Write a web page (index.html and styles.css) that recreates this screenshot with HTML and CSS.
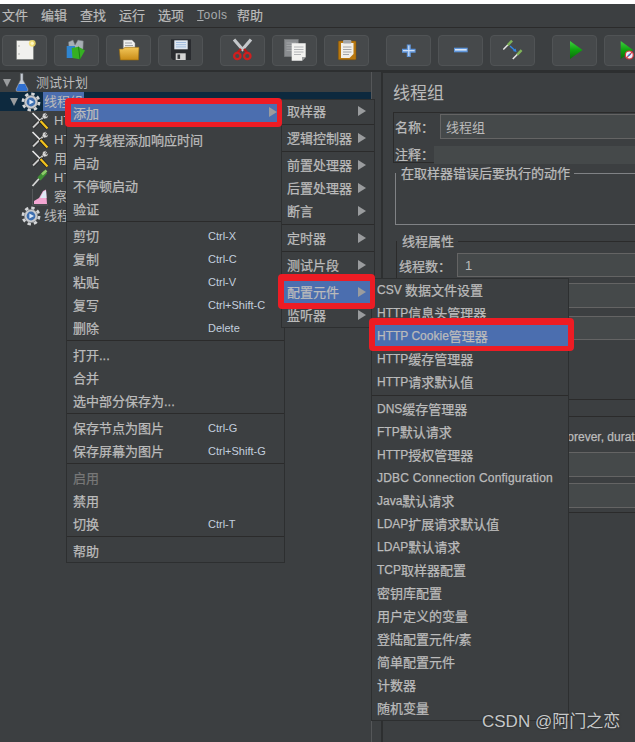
FILE: index.html
```html
<!doctype html>
<html lang="zh-CN">
<head>
  <meta charset="UTF-8">
  <title>线程组</title>
  <link rel="stylesheet" href="styles.css">
</head>
<body>
  <svg class="icon-defs" aria-hidden="true">
    <defs>
      <linearGradient id="greenPlay" x1="0" y1="0" x2="0" y2="1">
        <stop offset="0" stop-color="#3fd13f"/>
        <stop offset="0.5" stop-color="#0fa30f"/>
        <stop offset="1" stop-color="#0a6d0a"/>
      </linearGradient>
      <linearGradient id="folderFill" x1="0" y1="0" x2="0" y2="1">
        <stop offset="0" stop-color="#f2c65a"/>
        <stop offset="1" stop-color="#c98c16"/>
      </linearGradient>
      <symbol id="i-gear" viewBox="0 0 20 20">
        <circle cx="10" cy="10" r="7.6" fill="none" stroke="#d4d6d8" stroke-width="3.6" stroke-dasharray="3.2 2.77"/>
        <circle cx="10" cy="10" r="6.6" fill="#c9cbce" stroke="#83878a" stroke-width="0.8"/>
        <circle cx="10" cy="10" r="4.4" fill="#3e6fb0"/>
        <path d="M8.4 7.4 L13 10 L8.4 12.6 Z" fill="#dbe7f7"/>
      </symbol>
      <symbol id="i-tools" viewBox="0 0 18 18">
        <path d="M15.5 2 L2 15.5" stroke="#202020" stroke-width="3.4" fill="none"/>
        <path d="M15.5 2 L2 15.5" stroke="#c8c8c8" stroke-width="2" fill="none"/>
        <path d="M12 1.5 L15.5 0.5 L14 3.5 L15 4.5 L17.5 3 L16.5 6 L13.5 7 L11 5 Z" fill="#d8d8d8" stroke="#333" stroke-width="0.5"/>
        <path d="M1.5 1 L9 8.5" stroke="#e8e8e8" stroke-width="1.6" fill="none"/>
        <path d="M9 8.5 L16.5 16.5" stroke="#1c1c1c" stroke-width="3.8" fill="none"/>
        <path d="M9.5 9 L16.5 16.5" stroke="#f0c11e" stroke-width="2.4" fill="none"/>
      </symbol>
      <symbol id="i-pipette" viewBox="0 0 18 18">
        <path d="M1.5 17 L9.5 8" stroke="#d8d8d8" stroke-width="1.8" fill="none"/>
        <path d="M8 10 L14.5 3" stroke="#3f8f35" stroke-width="4.4" fill="none"/>
        <path d="M11 5.5 L15.5 1.5" stroke="#8ecb6a" stroke-width="2.6" fill="none"/>
      </symbol>
      <symbol id="i-graph" viewBox="0 0 18 18">
        <path d="M1.5 1 V17 H17" stroke="#55585a" stroke-width="1" fill="none"/>
        <path d="M3 16 L3 13 L8 10 L12 3 L15 1.5 L16 16 Z" fill="#f3a6d2"/>
        <path d="M9 10 L12.5 3.5 L15 2.5 L15.5 10 Z" fill="#dfe9f5"/>
      </symbol>
      <symbol id="i-flask" viewBox="0 0 14 19">
        <path d="M5.4 0.5 H8 V7 L13 16 Q13.5 18.5 11.5 18.5 H2.5 Q0.5 18.5 1 16 L5.4 7 Z" fill="#c6ccd4" stroke="#6f7478" stroke-width="0.6"/>
        <path d="M3.8 11 H10 L12.6 16.4 Q13 18 11.4 18 H2.6 Q1 18 1.4 16.4 Z" fill="#2f6fd0"/>
      </symbol>
      <symbol id="i-stick" viewBox="0 0 12 12">
        <path d="M0.8 11 L6 5.8" stroke="#e4e4e4" stroke-width="1.6" fill="none"/>
        <path d="M5.5 6.3 L10 1.8" stroke="#7fb35a" stroke-width="2.6" fill="none"/>
      </symbol>
    </defs>
  </svg>

  <div class="top-strip"></div>

  <nav class="menu-bar">
    <span>文件</span>
    <span>编辑</span>
    <span>查找</span>
    <span>运行</span>
    <span>选项</span>
    <span class="menu-tools"><u>T</u>ools</span>
    <span>帮助</span>
  </nav>

  <div class="toolbar">
    <button class="tool-btn">
      <svg viewBox="0 0 45 31">
        <rect x="14.7" y="5.7" width="16.6" height="18.6" fill="#f1f1ee" stroke="#8d8f8c" stroke-width="0.6"/>
        <circle cx="17" cy="11" r="0.7" fill="#999"/>
        <circle cx="17" cy="19" r="0.7" fill="#999"/>
        <circle cx="30.3" cy="8.3" r="3.4" fill="#f7e06a" opacity="0.85"/>
        <circle cx="30.3" cy="8.3" r="1.6" fill="#fff7c2"/>
      </svg>
    </button>
    <button class="tool-btn">
      <svg viewBox="0 0 45 31">
        <path d="M14.5 7 L19 5 L21 10 L24 5 L29.3 6 L29 14 L15 14 Z" fill="#a8afb5" stroke="#71777b" stroke-width="0.5"/>
        <rect x="12.7" y="11" width="8.3" height="12" fill="#2f85d0"/>
        <path d="M17.7 13 L24.5 11.7 L31 15.5 L26 24.3 L18.5 23 Z" fill="#35b022"/>
        <path d="M24.5 11.7 L26 24.3" stroke="#1d7d15" stroke-width="1" fill="none"/>
      </svg>
    </button>
    <button class="tool-btn">
      <svg viewBox="0 0 45 31">
        <path d="M17.3 5 H26 L29 8 V16 H17.3 Z" fill="#efefef" stroke="#8b8b8b" stroke-width="0.5"/>
        <path d="M19 8 H26 M19 10.5 H27 M19 13 H27" stroke="#8a8f96" stroke-width="0.8"/>
        <path d="M13.3 14 H17 L19 12.3 H33 L32.5 25 H14.3 Z" fill="url(#folderFill)" stroke="#96690f" stroke-width="0.6"/>
      </svg>
    </button>
    <button class="tool-btn">
      <svg viewBox="0 0 45 31">
        <path d="M13 4.3 H33 V25 H15 L13 23 Z" fill="#2a2c30"/>
        <rect x="16.3" y="5.3" width="13.4" height="9" fill="#dfe7f2"/>
        <path d="M18 7.5 H28 M18 9.7 H28 M18 11.9 H28" stroke="#8fb0d8" stroke-width="0.8"/>
        <rect x="17.7" y="18.3" width="10" height="6.7" fill="#d4d4d4"/>
        <rect x="19.5" y="19.5" width="2.6" height="4.4" fill="#35373a"/>
      </svg>
    </button>

    <button class="tool-btn group-start">
      <svg viewBox="0 0 45 31">
        <path d="M14 4.5 L23.5 15.5 M31 4.5 L21.5 15.5" stroke="#c4c7ca" stroke-width="3.2" fill="none"/>
        <path d="M21 14 L17.5 17.5 M24 14 L27 17.5" stroke="#b51a1a" stroke-width="2.4" fill="none"/>
        <circle cx="17.3" cy="21" r="3.2" fill="none" stroke="#cf1f1f" stroke-width="2.3"/>
        <circle cx="27.3" cy="21" r="3.2" fill="none" stroke="#cf1f1f" stroke-width="2.3"/>
      </svg>
    </button>
    <button class="tool-btn">
      <svg viewBox="0 0 45 31">
        <rect x="12.3" y="4.3" width="14" height="17.4" fill="#8a8d90" stroke="#75787a" stroke-width="0.5"/>
        <path d="M14.5 8 H24 M14.5 10.5 H24 M14.5 13 H24 M14.5 15.5 H24" stroke="#a8abad" stroke-width="0.8"/>
        <path d="M19.7 8.3 H33.7 V22 L30 25.7 H19.7 Z" fill="#f2f2f0"/>
        <path d="M30 25.7 V22 H33.7 Z" fill="#9b9d9e"/>
        <path d="M22 12 H31.5 M22 14.5 H31.5 M22 17 H31.5 M22 19.5 H29" stroke="#a2a5a8" stroke-width="0.8"/>
      </svg>
    </button>
    <button class="tool-btn">
      <svg viewBox="0 0 45 31">
        <rect x="14.3" y="6" width="17.7" height="18.7" rx="0.8" fill="#b9780f" stroke="#7f5208" stroke-width="0.5"/>
        <path d="M17 8 H29.5 V19 L25.5 23 H17 Z" fill="#f0efe9"/>
        <path d="M19 12 H27.5 M19 14.5 H27.5 M19 17 H27.5 M19 19.5 H25" stroke="#8f9296" stroke-width="0.8"/>
        <rect x="19" y="5" width="8.4" height="3.4" rx="1" fill="#a3a6a8"/>
      </svg>
    </button>

    <button class="tool-btn group-start">
      <svg viewBox="0 0 45 31">
        <path d="M22.8 9.5 V22 M16 15.7 H29.6" stroke="#5f95da" stroke-width="4" fill="none"/>
        <path d="M22.8 10.5 V21 M17 15.7 H28.6" stroke="#cfe0f7" stroke-width="1.2" fill="none"/>
      </svg>
    </button>
    <button class="tool-btn">
      <svg viewBox="0 0 45 31">
        <rect x="16" y="12.7" width="13.7" height="4.6" fill="#5f95da"/>
        <rect x="17" y="14" width="11.7" height="1.6" fill="#d8e6f8"/>
      </svg>
    </button>
    <button class="tool-btn">
      <svg viewBox="0 0 45 31">
        <use href="#i-stick" x="12.5" y="4" width="11.5" height="11.5"/>
        <use href="#i-stick" x="22" y="13.5" width="11.5" height="11.5"/>
        <path d="M20 11 L25 15.5" stroke="#2f86e8" stroke-width="1.4" fill="none"/>
        <path d="M26.5 17 L22.8 16 L25.6 13.5 Z" fill="#2f86e8"/>
      </svg>
    </button>

    <button class="tool-btn group-start">
      <svg viewBox="0 0 45 31">
        <path d="M18 6 L30.5 15 L18 24 Z" fill="url(#greenPlay)"/>
      </svg>
    </button>
    <button class="tool-btn">
      <svg viewBox="0 0 45 31">
        <path d="M16.7 6 L29 15 L16.7 24 Z" fill="url(#greenPlay)"/>
        <circle cx="25.3" cy="20" r="4" fill="#e8eef8" stroke="#d8353a" stroke-width="1.2"/>
        <path d="M22.5 22.8 L28 17.2" stroke="#d8353a" stroke-width="1.2"/>
        <path d="M24 21 L26.5 19" stroke="#3c78d0" stroke-width="1.6"/>
      </svg>
    </button>
  </div>

  <div class="main">
    <aside class="tree">
      <div class="tree-row level-0">
        <span class="twist"></span>
        <svg class="tree-icon flask"><use href="#i-flask"/></svg>
        <span class="tree-text">测试计划</span>
      </div>
      <div class="tree-row level-1 selected">
        <span class="twist"></span>
        <svg class="tree-icon gear"><use href="#i-gear"/></svg>
        <span class="tree-text">线程组</span>
      </div>
      <div class="tree-row level-2">
        <svg class="tree-icon"><use href="#i-tools"/></svg>
        <span class="tree-text">HT</span>
      </div>
      <div class="tree-row level-2">
        <svg class="tree-icon"><use href="#i-tools"/></svg>
        <span class="tree-text">HT</span>
      </div>
      <div class="tree-row level-2">
        <svg class="tree-icon"><use href="#i-tools"/></svg>
        <span class="tree-text">用</span>
      </div>
      <div class="tree-row level-2">
        <svg class="tree-icon"><use href="#i-pipette"/></svg>
        <span class="tree-text">HT</span>
      </div>
      <div class="tree-row level-2">
        <svg class="tree-icon"><use href="#i-graph"/></svg>
        <span class="tree-text">察</span>
      </div>
      <div class="tree-row level-1">
        <span class="twist blank"></span>
        <svg class="tree-icon gear"><use href="#i-gear"/></svg>
        <span class="tree-text">线程</span>
      </div>
    </aside>

    <section class="detail">
      <h1 class="detail-title">线程组</h1>

      <div class="name-box">
        <div class="name-row">
          <label class="name-label">名称：</label>
          <input class="field" type="text" value="线程组">
        </div>
        <div class="note-row">
          <label class="note-label">注释：</label>
          <div class="note-field"></div>
        </div>
      </div>

      <fieldset class="group light">
        <legend>在取样器错误后要执行的动作</legend>
      </fieldset>

      <fieldset class="group dark props">
        <legend>线程属性</legend>
        <div class="prop-row first">
          <label class="prop-label">线程数：</label>
          <input class="field" type="text" value="1">
        </div>
        <div class="prop-row second"><input class="field" type="text"></div>
        <div class="prop-row third"><input class="field" type="text"></div>
      </fieldset>

      <div class="group dark schedule">
        <p class="schedule-note">Forever, duration</p>
        <div class="prop-row"><input class="field" type="text"></div>
        <div class="prop-row fourth"><input class="field" type="text"></div>
      </div>
    </section>
  </div>

  <ul class="popup popup-main">
    <li class="item marked mark-add">添加<i class="arrow"></i></li>
    <li class="sep"></li>
    <li class="item">为子线程添加响应时间</li>
    <li class="item">启动</li>
    <li class="item">不停顿启动</li>
    <li class="item">验证</li>
    <li class="sep"></li>
    <li class="item">剪切<span class="keys">Ctrl-X</span></li>
    <li class="item">复制<span class="keys">Ctrl-C</span></li>
    <li class="item">粘贴<span class="keys">Ctrl-V</span></li>
    <li class="item">复写<span class="keys">Ctrl+Shift-C</span></li>
    <li class="item">删除<span class="keys">Delete</span></li>
    <li class="sep"></li>
    <li class="item">打开...</li>
    <li class="item">合并</li>
    <li class="item">选中部分保存为...</li>
    <li class="sep"></li>
    <li class="item">保存节点为图片<span class="keys">Ctrl-G</span></li>
    <li class="item">保存屏幕为图片<span class="keys">Ctrl+Shift-G</span></li>
    <li class="sep"></li>
    <li class="item disabled">启用</li>
    <li class="item">禁用</li>
    <li class="item">切换<span class="keys">Ctrl-T</span></li>
    <li class="sep"></li>
    <li class="item">帮助</li>
  </ul>

  <ul class="popup popup-add">
    <li class="item">取样器<i class="arrow"></i></li>
    <li class="sep"></li>
    <li class="item">逻辑控制器<i class="arrow"></i></li>
    <li class="sep"></li>
    <li class="item">前置处理器<i class="arrow"></i></li>
    <li class="item">后置处理器<i class="arrow"></i></li>
    <li class="item">断言<i class="arrow"></i></li>
    <li class="sep"></li>
    <li class="item">定时器<i class="arrow"></i></li>
    <li class="sep"></li>
    <li class="item">测试片段<i class="arrow"></i></li>
    <li class="sep"></li>
    <li class="item marked mark-config">配置元件<i class="arrow"></i></li>
    <li class="item">监听器<i class="arrow"></i></li>
  </ul>

  <ul class="popup popup-config">
    <li class="item"><span class="en">CSV&nbsp;</span>数据文件设置</li>
    <li class="item"><span class="en">HTTP</span>信息头管理器</li>
    <li class="item marked mark-cookie"><span class="en">HTTP Cookie</span>管理器</li>
    <li class="item"><span class="en">HTTP</span>缓存管理器</li>
    <li class="item"><span class="en">HTTP</span>请求默认值</li>
    <li class="sep"></li>
    <li class="item"><span class="en">DNS</span>缓存管理器</li>
    <li class="item"><span class="en">FTP</span>默认请求</li>
    <li class="item"><span class="en">HTTP</span>授权管理器</li>
    <li class="item"><span class="en wide">JDBC Connection Configuration</span></li>
    <li class="item"><span class="en">Java</span>默认请求</li>
    <li class="item"><span class="en">LDAP</span>扩展请求默认值</li>
    <li class="item"><span class="en">LDAP</span>默认请求</li>
    <li class="item"><span class="en">TCP</span>取样器配置</li>
    <li class="item">密钥库配置</li>
    <li class="item">用户定义的变量</li>
    <li class="item">登陆配置元件/素</li>
    <li class="item">简单配置元件</li>
    <li class="item">计数器</li>
    <li class="item">随机变量</li>
  </ul>

  <div class="watermark">CSDN @阿门之恋</div>
</body>
</html>
```

FILE: styles.css
```css
* {
  box-sizing: border-box;
}
html, body {
  margin: 0;
  height: 742px;
}
body {
  position: relative;
  overflow: hidden;
  background-color: #3c3f41;
  color: #bbbbbb;
  font-family: "Liberation Sans", "Noto Sans CJK SC", sans-serif;
  font-size: 13px;
}
.icon-defs {
  position: absolute;
  width: 0;
  height: 0;
}
.top-strip {
  height: 4px;
  background-color: #fff;
}

/* menu bar */
.menu-bar {
  display: flex;
  align-items: center;
  gap: 13px;
  height: 24px;
  padding-left: 2px;
  border-bottom: 1px solid #2b2b2b;
  line-height: 23px;
  -webkit-text-stroke: 0.2px;
}
.menu-tools {
  width: 30px;
  margin-right: -3px;
  font-size: 12px;
  color: #a9acae;
  letter-spacing: 0.5px;
  -webkit-text-stroke: 0;
}

/* toolbar */
.toolbar {
  display: flex;
  gap: 7px;
  height: 44px;
  padding: 7px 0 0 2px;
  border-bottom: 2px solid #2d2f30;
}
.tool-btn {
  flex: none;
  width: 45px;
  height: 31px;
  padding: 0;
  border: 1px solid #505355;
  border-radius: 4px;
  background-color: #46494b;
}
.tool-btn svg {
  display: block;
  width: 45px;
  height: 31px;
  margin: -1px;
}
.group-start {
  margin-left: 10px;
}

/* tree and detail split */
.main {
  display: flex;
  height: 670px;
}
.tree {
  flex: none;
  width: 372px;
  padding-top: 1px;
  border-right: 1px solid #555759;
}
.tree-row {
  display: flex;
  align-items: center;
  height: 19px;
  white-space: nowrap;
}
.tree-row.selected {
  background-color: #0d293e;
}
.tree-row.selected .tree-text {
  background-color: #4b6eaf;
}
.level-0 {
  padding-left: 3px;
}
.level-1 {
  padding-left: 10px;
}
.level-2 {
  padding-left: 31px;
}
.twist {
  flex: none;
  width: 0;
  height: 0;
  margin-right: 4px;
  border-top: 8px solid #9a9c9e;
  border-left: 4.5px solid transparent;
  border-right: 4.5px solid transparent;
}
.twist.blank {
  border-top-color: transparent;
}
.tree-icon {
  flex: none;
  width: 18px;
  height: 18px;
  margin-right: 4px;
}
.tree-icon.flask {
  width: 14px;
  height: 19px;
  margin-right: 6px;
}
.tree-icon.gear {
  width: 20px;
  height: 20px;
  margin-right: 2px;
  margin-left: -1px;
}
.tree-text {
  height: 19px;
  padding: 0 1px;
  line-height: 19px;
}

/* right side */
.detail {
  flex: 1;
  min-width: 0;
  margin-left: 9px;
  padding: 10px 0 0 10px;
  border-left: 2px solid #2d2f30;
  border-top: 1px solid #2d2f30;
  overflow: hidden;
}
.detail-title {
  margin: 0;
  height: 24px;
  font-size: 17px;
  font-weight: normal;
  line-height: 22px;
}
.name-box {
  width: 300px;
  height: 51px;
  margin-top: 5px;
  padding: 1px 0 0 1px;
  border: 1px solid #2b2b2b;
  -webkit-text-stroke: 0.25px;
}
.name-row,
.note-row {
  display: flex;
  align-items: center;
}
.name-label {
  flex: none;
  width: 45px;
  padding-bottom: 1px;
}
.note-label {
  flex: none;
  width: 39px;
  padding-bottom: 2px;
}
.note-row {
  margin-top: 5px;
}
.note-field {
  flex: 1;
  height: 18px;
  background-color: #45494a;
}
.field {
  flex: 1;
  min-width: 0;
  height: 25px;
  padding: 0 5px;
  border: 1px solid #646464;
  background-color: #45494a;
  color: #bbbbbb;
  font: inherit;
  -webkit-text-stroke: 0;
}
.group {
  width: 300px;
  min-width: 0;
  margin: 0;
  padding: 0;
}
.group.light {
  height: 59px;
  margin-top: 3px;
  margin-left: 2px;
  border: 1px solid #808285;
}
.group.dark {
  border: 1px solid #2b2b2b;
}
legend {
  height: 14px;
  padding: 0 4px 0 5px;
  line-height: 16px;
  -webkit-text-stroke: 0.25px;
}
.props {
  height: 166px;
  margin: 9px 0 0 3px;
}
.prop-row {
  display: flex;
  align-items: center;
  padding-left: 2px;
}
.prop-row.first {
  margin-top: 5px;
}
.prop-row.first .field {
  padding-left: 7px;
  height: 24px;
}
.prop-label {
  flex: none;
  width: 58px;
  -webkit-text-stroke: 0.25px;
}
.prop-row.second {
  margin-top: 6px;
}
.prop-row.third {
  margin-top: 8px;
}
.prop-row.third .field {
  height: 24px;
}
.schedule {
  height: 97px;
  margin: 16px 0 0 3px;
}
.schedule-note {
  height: 35px;
  margin: 0;
  padding-left: 163px;
  line-height: 41px;
  font-size: 12px;
  white-space: nowrap;
  -webkit-text-stroke: 0.25px;
}
.schedule .prop-row .field {
  height: 25px;
}
.prop-row.fourth {
  margin-top: 6px;
}

/* popup menus */
.popup {
  position: absolute;
  margin: 0;
  padding: 0;
  list-style: none;
  background-color: #3c3f41;
  border: 1px solid #2d2f30;
}
.popup-main {
  left: 66px;
  top: 100px;
  width: 219px;
}
.popup-add {
  left: 281px;
  top: 99px;
  width: 94px;
}
.popup-config {
  left: 371px;
  top: 278px;
  width: 198px;
}
.item {
  position: relative;
  display: flex;
  align-items: center;
  height: 23px;
  padding: 0 0 2px 6px;
  white-space: nowrap;
  -webkit-text-stroke: 0.25px;
}
.popup-main .item {
  padding-bottom: 0;
}
.popup-add .item,
.popup-config .item {
  padding-left: 5px;
}
.item.disabled {
  color: #777777;
}
.en {
  font-size: 12px;
  white-space: pre;
}
.en.wide {
  letter-spacing: 0.2px;
}
.sep {
  height: 4px;
  padding-top: 1px;
}
.sep::before {
  content: "";
  display: block;
  height: 1px;
  background-color: #2b2b2b;
}
.keys {
  position: absolute;
  left: 141px;
  font-size: 11px;
  color: #c3cfdf;
  -webkit-text-stroke: 0;
}
.arrow {
  position: absolute;
  right: 8px;
  top: 6px;
  width: 0;
  height: 0;
  border-left: 8px solid #9a9c9e;
  border-top: 5px solid transparent;
  border-bottom: 5px solid transparent;
}

/* highlighted rows with the red annotation frame */
.marked {
  background-color: #4b6eaf;
}
.marked::after {
  content: "";
  position: absolute;
  z-index: 5;
  border: solid #ed1c24;
  border-radius: 4px;
}
.mark-add::after {
  top: -3px;
  bottom: -3px;
  left: -2px;
  right: 2px;
  border-width: 6px 5px 5px 6px;
}
.mark-config::after {
  top: -7px;
  bottom: -5px;
  left: -4px;
  right: -1px;
  border-width: 7px 5px 6px 6px;
}
.mark-cookie::after {
  top: -7px;
  bottom: -3px;
  left: -3px;
  right: -6px;
  border-width: 7px 6px 5px 6px;
}
.mark-add .arrow {
  right: 7px;
}

.watermark {
  position: absolute;
  left: 482px;
  top: 712px;
  font-size: 17px;
  line-height: 20px;
  color: #c6c8c9;
  text-shadow: 0 0 2px #222;
  white-space: nowrap;
}
```
